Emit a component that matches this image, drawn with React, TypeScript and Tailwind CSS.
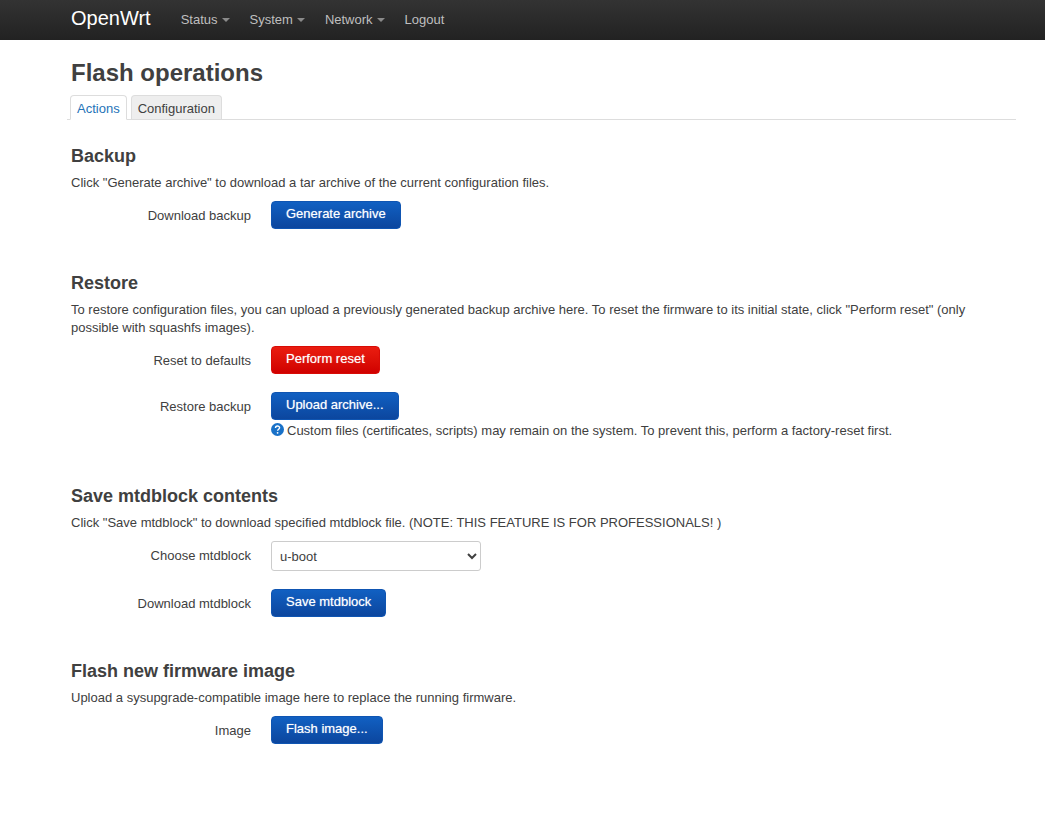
import type { ReactNode } from "react";
import clsx from "clsx";

const menus = ["Status", "System", "Network"];

const Navbar = () => {
  return (
    <header className="h-10 bg-linear-to-b from-[#333] to-[#222] pl-[71px]">
      <nav className="flex h-full items-center">
        <a href="#" className="mr-[30px] pb-1 text-[20px] leading-5 text-white">
          OpenWrt
        </a>
        <ul className="flex gap-5 text-[#bfbfbf]">
          {menus.map((menu) => (
            <li key={menu}>
              <a href="#" className="flex items-center gap-1">
                {menu}
                <span className="border-x-4 border-t-4 border-x-transparent border-t-[#8a8a8a]" />
              </a>
            </li>
          ))}
          <li>
            <a href="#">Logout</a>
          </li>
        </ul>
      </nav>
    </header>
  );
};

const Tabs = () => {
  return (
    <ul className="-ml-1 mb-[18px] flex gap-1 border-b border-[#ddd] pl-[3px]">
      <li className="-mb-px rounded-t border border-[#ddd] border-b-white bg-white px-1.5">
        <a href="#" className="block pt-[3px] leading-5 text-[#2573b8]">
          Actions
        </a>
      </li>
      <li className="rounded-t border border-b-0 border-[#ddd] bg-[#eee] px-1.5">
        <a href="#configuration" className="block pt-[3px] leading-5">
          Configuration
        </a>
      </li>
    </ul>
  );
};

type SectionProps = {
  title: string;
  description: string;
  children: ReactNode;
};

const Section = ({ title, description, children }: SectionProps) => {
  return (
    <section className="mb-9">
      <h3 className="text-[18px] leading-9 font-bold">{title}</h3>
      <p className="mb-[9px]">{description}</p>
      <div className="flex flex-col gap-[18px]">{children}</div>
    </section>
  );
};

type RowProps = {
  id: string;
  label: string;
  children: ReactNode;
};

const Row = ({ id, label, children }: RowProps) => {
  return (
    <div className="flex gap-5">
      <label htmlFor={id} className="w-[180px] shrink-0 pt-1.5 text-right">
        {label}
      </label>
      <div>{children}</div>
    </div>
  );
};

type ActionButtonProps = {
  id: string;
  danger?: boolean;
  children: ReactNode;
};

const ActionButton = ({ id, danger, children }: ActionButtonProps) => {
  return (
    <button
      id={id}
      type="button"
      className={clsx(
        "block h-7 rounded border px-3.5 pb-0.5 leading-[18px] text-white text-shadow-[0_0_1px_#ffffff99]",
        danger
          ? "border-[#d80b06] bg-linear-to-b from-[#ea1c10] to-[#d00000]"
          : "border-[#0f55b2] bg-linear-to-b from-[#1160c2] to-[#0c469e]"
      )}
    >
      {children}
    </button>
  );
};

const HelpIcon = () => {
  return (
    <svg viewBox="0 0 13 13" className="mt-[3px] h-[13px] w-[13px] shrink-0">
      <circle cx="6.5" cy="6.5" r="6.5" fill="#1971c8" />
      <path
        d="M4.5 5C4.5 2.4 8.6 2.4 8.6 4.8C8.6 6.2 6.6 6.2 6.6 7.8"
        fill="none"
        stroke="#fff"
        strokeWidth="1.4"
      />
      <circle cx="6.6" cy="9.8" r="0.9" fill="#fff" />
    </svg>
  );
};

const App = () => {
  return (
    <div className="bg-white font-['Liberation_Sans',Arial,sans-serif] text-[13px] leading-[18px] text-[#404040]">
      <Navbar />
      <main className="pt-[15px] pr-[29px] pl-[71px]">
        <h2 className="mb-1 text-[24px] leading-9 font-bold">
          Flash operations
        </h2>
        <Tabs />

        <Section
          title="Backup"
          description={
            'Click "Generate archive" to download a tar archive of the current configuration files.'
          }
        >
          <Row id="backup" label="Download backup">
            <ActionButton id="backup">Generate archive</ActionButton>
          </Row>
        </Section>

        <Section
          title="Restore"
          description={
            'To restore configuration files, you can upload a previously generated backup archive here. To reset the firmware to its initial state, click "Perform reset" (only possible with squashfs images).'
          }
        >
          <Row id="reset" label="Reset to defaults">
            <ActionButton id="reset" danger>
              Perform reset
            </ActionButton>
          </Row>
          <Row id="restore" label="Restore backup">
            <ActionButton id="restore">Upload archive...</ActionButton>
            <div className="flex gap-[3px] leading-[22px]">
              <HelpIcon />
              Custom files (certificates, scripts) may remain on the system. To
              prevent this, perform a factory-reset first.
            </div>
          </Row>
        </Section>

        <Section
          title="Save mtdblock contents"
          description={
            'Click "Save mtdblock" to download specified mtdblock file. (NOTE: THIS FEATURE IS FOR PROFESSIONALS! )'
          }
        >
          <Row id="mtdblock" label="Choose mtdblock">
            <select
              id="mtdblock"
              className="block h-[30px] w-[210px] rounded-[3px] border border-[#ccc] bg-white px-1"
            >
              <option>u-boot</option>
            </select>
          </Row>
          <Row id="save" label="Download mtdblock">
            <ActionButton id="save">Save mtdblock</ActionButton>
          </Row>
        </Section>

        <Section
          title="Flash new firmware image"
          description="Upload a sysupgrade-compatible image here to replace the running firmware."
        >
          <Row id="flash" label="Image">
            <ActionButton id="flash">Flash image...</ActionButton>
          </Row>
        </Section>
      </main>
    </div>
  );
};

export default App;
